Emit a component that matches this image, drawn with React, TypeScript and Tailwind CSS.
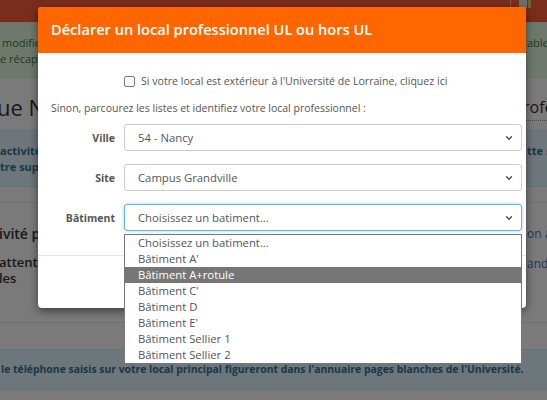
import { ChevronDown } from 'lucide-react';

const batiments = [
  'Choisissez un batiment...',
  "Bâtiment A'",
  'Bâtiment A+rotule',
  "Bâtiment C'",
  'Bâtiment D',
  "Bâtiment E'",
  'Bâtiment Sellier 1',
  'Bâtiment Sellier 2',
];

function FakeSelect({ value, focused }: { value: string; focused?: boolean }) {
  return (
    <div
      className={`flex h-[27px] items-center justify-between rounded-[3px] border bg-white pl-[13px] pr-[7px] text-[11.3px] text-[#555] ${
        focused ? 'border-[#66afe9] shadow-[0_0_4px_rgba(102,175,233,0.5)]' : 'border-[#ccc]'
      }`}
    >
      <span>{value}</span>
      <ChevronDown className="h-[10px] w-[10px] text-[#444]" strokeWidth={3} />
    </div>
  );
}

export default function App() {
  return (
    <div className="relative h-[400px] w-[547px] overflow-hidden bg-[#f4f4f4] font-['Open_Sans',sans-serif]">
      {/* Page behind the modal */}
      <div className="flex h-[22px] items-start justify-end bg-[#f45a38] pr-[16px]">
        <div className="mr-[8px] h-[22px] w-px bg-white/50" />
        <div className="h-[8px] w-[8px] bg-[#ddd]" />
        <div className="ml-[1px] h-[8px] w-[3px] bg-[#f3c04a]" />
      </div>

      <div className="flex h-[56px] justify-between border-y border-[#d6e9c6] bg-[#dff0d8] pt-[12px] text-[11px] leading-[16px] text-[#3c763d]">
        <div className="whitespace-nowrap">
          <div className="pl-[2px]">modifiez</div>
          <div>e récapitulatif</div>
        </div>
        <div className="w-[20px] overflow-hidden whitespace-nowrap">able</div>
      </div>

      <div className="flex h-[52px] items-center justify-between pt-[6px] text-[#333]">
        <div className="-ml-[3px] whitespace-nowrap text-[22px]">ue Numérique</div>
        <div className="-mr-[30px] w-[54px] overflow-hidden whitespace-nowrap border-b border-dotted border-[#999] text-[16px] leading-[26px]">
          rofessionnel
        </div>
      </div>

      <div className="flex h-[57px] justify-between border-y border-[#bce8f1] bg-[#d9edf7] pt-[12px] text-[11px] font-bold leading-[16px] text-[#31708f]">
        <div className="whitespace-nowrap">
          <div>activité</div>
          <div>tre supérieur</div>
        </div>
        <div className="w-[20px] overflow-hidden whitespace-nowrap">tte s</div>
      </div>

      <div className="h-[16px] border-b border-[#e3e3e3]" />

      <div className="flex h-[120px] justify-between border-b border-[#ddd] pt-[21px]">
        <div className="-ml-[1px] whitespace-nowrap text-[#333]">
          <div className="text-[14px] font-semibold leading-[20px]">ivité professionnelle</div>
          <div className="mt-[10px] text-[13px] font-semibold leading-[16px]">attente de</div>
          <div className="text-[13px] font-semibold leading-[16px]">les</div>
        </div>
        <div className="w-[20px] overflow-hidden whitespace-nowrap text-[12px] text-[#337ab7]">
          <div className="leading-[20px]">on a</div>
          <div className="mt-[11px] leading-[17px]">ande</div>
        </div>
      </div>

      <div className="h-[26px]" />

      <div className="flex h-[41px] items-center border-y border-[#bce8f1] bg-[#d9edf7] text-[10.4px] font-bold text-[#31708f]">
        <span className="whitespace-nowrap pl-[1px]">
          le téléphone saisis sur votre local principal figureront dans l'annuaire pages blanches de l'Université.
        </span>
      </div>

      {/* Backdrop */}
      <div className="absolute inset-0 bg-black/50" />

      {/* Modal */}
      <div className="absolute left-[38px] top-[7px] w-[488px] rounded-[4px] bg-white shadow-[0_3px_9px_rgba(0,0,0,0.5)]">
        <div className="flex h-[46px] items-center rounded-t-[3px] bg-[#ff6600] px-[13px]">
          <h4 className="text-[14.6px] font-semibold text-white">Déclarer un local professionnel UL ou hors UL</h4>
        </div>

        <div className="pb-[24px] pl-[13px] pr-[4px] pt-[20px] text-[10.5px] leading-[16px] text-[#555]">
          <label className="flex items-center gap-[6px] pl-[73px] text-[10.6px]">
            <span className="h-[11px] w-[11px] rounded-[2px] border border-[#777]" />
            Si votre local est extérieur à l'Université de Lorraine, cliquez ici
          </label>

          <p className="mt-[11px]">Sinon, parcourez les listes et identifiez votre local professionnel :</p>

          <div className="mt-[8px] flex flex-col gap-[13px]">
            <div className="grid grid-cols-[64px_1fr] items-center gap-[9px]">
              <span className="text-right font-bold">Ville</span>
              <FakeSelect value="54 - Nancy" />
            </div>
            <div className="grid grid-cols-[64px_1fr] items-center gap-[9px]">
              <span className="text-right font-bold">Site</span>
              <FakeSelect value="Campus Grandville" />
            </div>
            <div className="grid grid-cols-[64px_1fr] items-center gap-[9px]">
              <span className="text-right font-bold">Bâtiment</span>
              <div className="relative">
                <FakeSelect value="Choisissez un batiment..." focused />
                <ul className="absolute left-0 top-[30px] z-10 w-full border border-[#767676] bg-white">
                  {batiments.map((b, i) => (
                    <li
                      key={b}
                      className={`h-[16px] pl-[13px] text-[11.3px] leading-[16px] ${
                        i === 2 ? 'bg-[#767676] text-white' : 'text-[#555]'
                      }`}
                    >
                      {b}
                    </li>
                  ))}
                </ul>
              </div>
            </div>
          </div>
        </div>

        <div className="h-[53px] border-t border-[#e5e5e5]" />
      </div>
    </div>
  );
}
